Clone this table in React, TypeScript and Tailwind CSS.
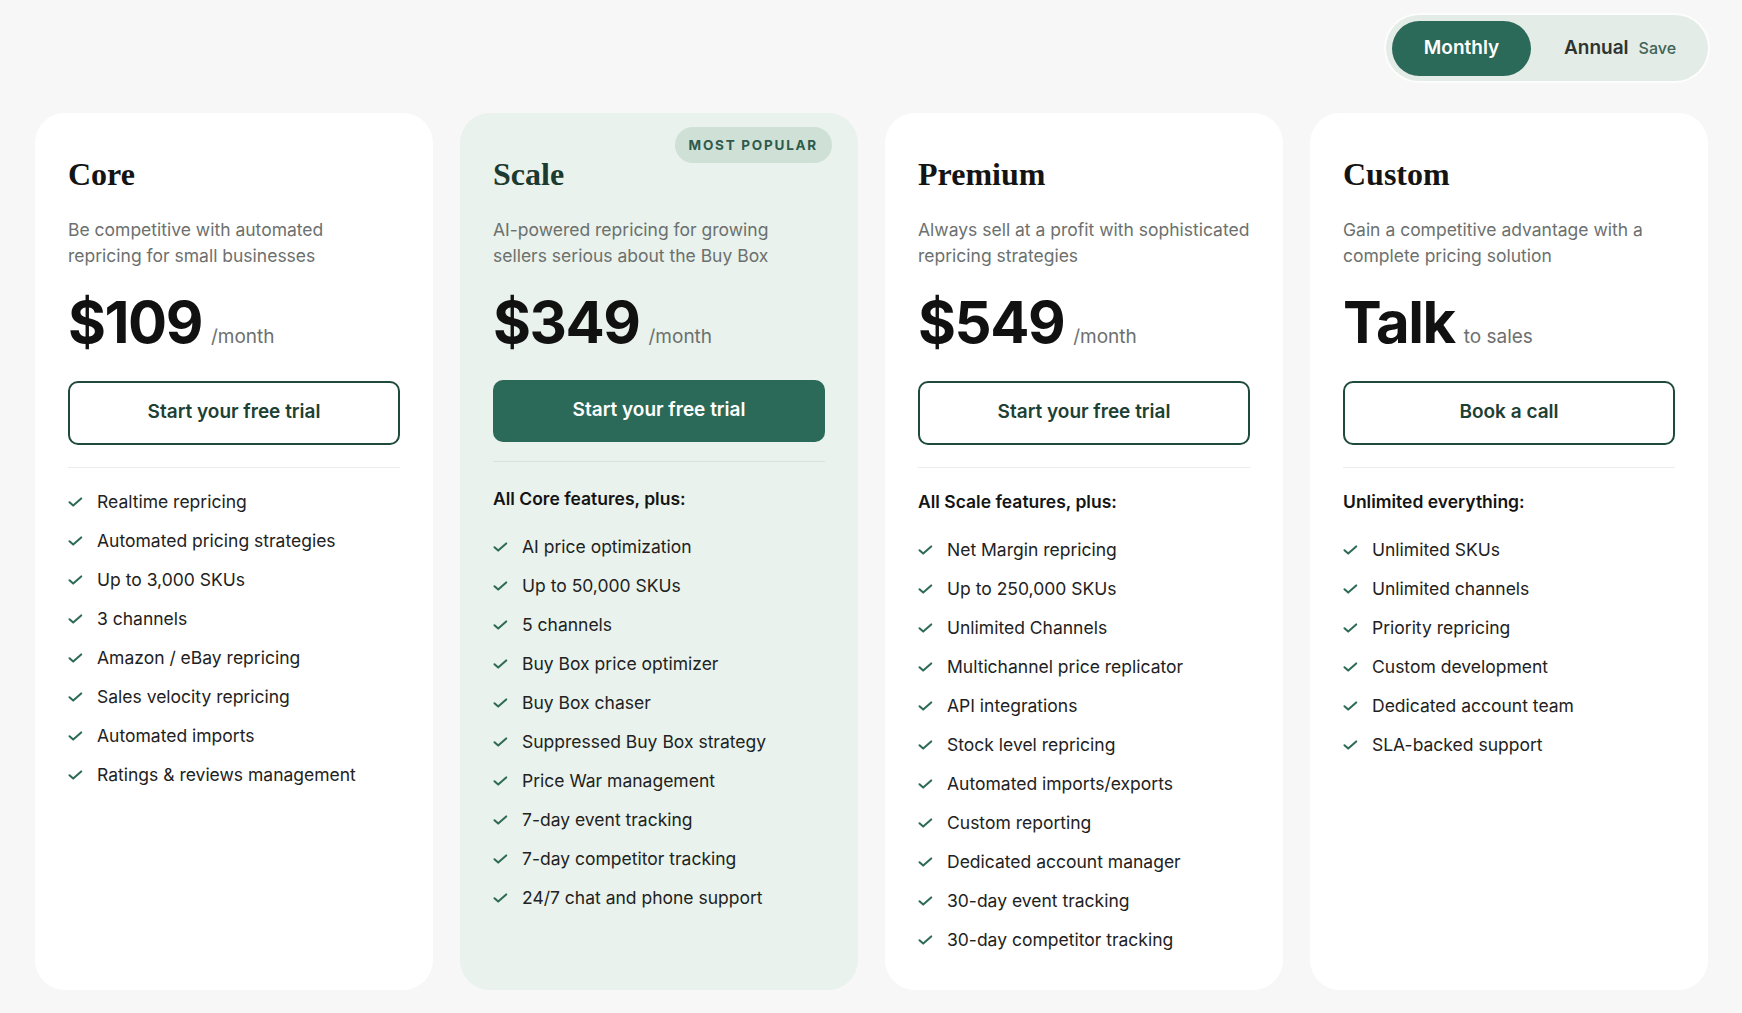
import React from "react";

type Plan = {
  name: string;
  desc: [string, string];
  price: string;
  unit: string;
  cta: string;
  primary?: boolean;
  heading?: string;
  features: string[];
  popular?: boolean;
};

const plans: Plan[] = [
  {
    name: "Core",
    desc: ["Be competitive with automated", "repricing for small businesses"],
    price: "$109",
    unit: "/month",
    cta: "Start your free trial",
    features: [
      "Realtime repricing",
      "Automated pricing strategies",
      "Up to 3,000 SKUs",
      "3 channels",
      "Amazon / eBay repricing",
      "Sales velocity repricing",
      "Automated imports",
      "Ratings & reviews management",
    ],
  },
  {
    name: "Scale",
    desc: ["AI-powered repricing for growing", "sellers serious about the Buy Box"],
    price: "$349",
    unit: "/month",
    cta: "Start your free trial",
    primary: true,
    popular: true,
    heading: "All Core features, plus:",
    features: [
      "AI price optimization",
      "Up to 50,000 SKUs",
      "5 channels",
      "Buy Box price optimizer",
      "Buy Box chaser",
      "Suppressed Buy Box strategy",
      "Price War management",
      "7-day event tracking",
      "7-day competitor tracking",
      "24/7 chat and phone support",
    ],
  },
  {
    name: "Premium",
    desc: ["Always sell at a profit with sophisticated", "repricing strategies"],
    price: "$549",
    unit: "/month",
    cta: "Start your free trial",
    heading: "All Scale features, plus:",
    features: [
      "Net Margin repricing",
      "Up to 250,000 SKUs",
      "Unlimited Channels",
      "Multichannel price replicator",
      "API integrations",
      "Stock level repricing",
      "Automated imports/exports",
      "Custom reporting",
      "Dedicated account manager",
      "30-day event tracking",
      "30-day competitor tracking",
    ],
  },
  {
    name: "Custom",
    desc: ["Gain a competitive advantage with a", "complete pricing solution"],
    price: "Talk",
    unit: "to sales",
    cta: "Book a call",
    heading: "Unlimited everything:",
    features: [
      "Unlimited SKUs",
      "Unlimited channels",
      "Priority repricing",
      "Custom development",
      "Dedicated account team",
      "SLA-backed support",
    ],
  },
];

function CheckIcon() {
  return (
    <svg width="15" height="10" viewBox="0 0 15 10" fill="none" className="shrink-0">
      <path d="M1.5 5.2 L5.2 8.6 L13.2 1.4" stroke="#2d6a58" strokeWidth="2" strokeLinecap="round" strokeLinejoin="round" />
    </svg>
  );
}

function Card({ plan }: { plan: Plan }) {
  return (
    <div
      className={
        plan.primary
          ? "relative flex flex-col rounded-[30px] bg-[#e9f2ec] px-[33px] pt-[43px] pb-[37px]"
          : "relative flex flex-col rounded-[30px] bg-white px-[33px] pt-[43px] pb-[37px]"
      }
    >
      {plan.popular && (
        <div className="absolute top-[14px] right-[26px] flex h-[36px] items-center rounded-full bg-[#cfe0d6] px-[14px] text-[13.5px] font-bold tracking-[0.13em] text-[#2d5a4b]">
          MOST POPULAR
        </div>
      )}
      <h2
        className={
          plan.primary
            ? "font-['Liberation_Serif',serif] text-[32px] font-bold leading-[36px] text-[#1c3a30]"
            : "font-['Liberation_Serif',serif] text-[32px] font-bold leading-[36px] text-[#141414]"
        }
      >
        {plan.name}
      </h2>
      <p className="mt-[25px] text-[17.5px] leading-[26px] text-[#6c706e]">
        {plan.desc[0]}
        <br />
        {plan.desc[1]}
      </p>
      <div className="mt-[24px] flex items-baseline">
        <span className="text-[58px] font-bold leading-[58px] tracking-[-0.025em] text-[#111111]">{plan.price}</span>
        <span className="ml-[9px] text-[19px] text-[#6c706e]">{plan.unit}</span>
      </div>
      {plan.primary ? (
        <button className="mt-[28px] flex h-[62px] w-full items-center justify-center rounded-[10px] bg-[#2b6a59] text-[19px] font-semibold text-white">
          {plan.cta}
        </button>
      ) : (
        <button className="mt-[29px] flex h-[64px] w-full items-center justify-center rounded-[10px] border-2 border-[#1f4a3e] bg-transparent text-[19px] font-semibold text-[#1d4034]">
          {plan.cta}
        </button>
      )}
      <div className={plan.primary ? "mt-[19px] h-px w-full bg-[#d7e4dc]" : "mt-[22px] h-px w-full bg-[#ececec]"} />
      {plan.heading && (
        <div className={plan.primary ? "mt-[24px] text-[17.5px] font-semibold leading-[26px] text-[#141414]" : "mt-[21px] text-[17.5px] font-semibold leading-[26px] text-[#141414]"}>
          {plan.heading}
        </div>
      )}
      <ul className={plan.heading ? "mt-[22px] flex flex-col gap-[13px]" : "mt-[21px] flex flex-col gap-[13px]"}>
        {plan.features.map((f) => (
          <li key={f} className="flex items-center gap-[14px] text-[17.5px] leading-[26px] text-[#222222]">
            <CheckIcon />
            <span>{f}</span>
          </li>
        ))}
      </ul>
    </div>
  );
}

export default function App() {
  return (
    <div className="min-h-screen w-full bg-[#f7f7f7] font-['Inter',sans-serif]">
      <div className="flex justify-end pt-[15px] pr-[34px]">
        <div className="flex h-[66px] w-[322px] items-center rounded-full bg-[#e4ece7] px-[6px] shadow-[0_0_0_2px_rgba(255,255,255,0.7)]">
          <div className="flex h-[55px] w-[139px] items-center justify-center rounded-full bg-[#2b6a59] text-[19px] font-semibold text-white">
            Monthly
          </div>
          <span className="ml-[33px] text-[19px] font-semibold text-[#2e3431]">Annual</span>
          <span className="ml-[10px] text-[16px] font-medium text-[#3d6457]">Save</span>
        </div>
      </div>
      <div className="mt-[32px] grid grid-cols-4 gap-[27px] pl-[35px] pr-[34px] pb-[25px]">
        {plans.map((p) => (
          <Card key={p.name} plan={p} />
        ))}
      </div>
    </div>
  );
}
